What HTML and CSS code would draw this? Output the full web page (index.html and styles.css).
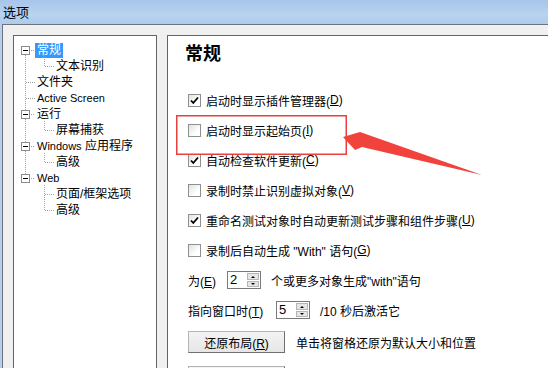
FILE: index.html
```html
<!DOCTYPE html>
<html lang="zh-CN">
<head>
    <meta charset="UTF-8">
    <meta name="viewport" content="width=device-width, initial-scale=1.0">
    <title>选项</title>
    <link rel="stylesheet" href="styles.css">
</head>
<body>
    <div class="titlebar">选项</div>

    <div class="window">
        <div class="tree_panel">
            <!-- dotted tree lines and expander boxes -->
            <svg class="tree_lines" width="142" height="200" viewBox="0 0 142 200">
                <g stroke="#a0a0a0" stroke-dasharray="1 1" fill="none">
                    <line x1="11.5" y1="19" x2="11.5" y2="138"/>
                    <line x1="17" y1="14.5" x2="21" y2="14.5"/>
                    <line x1="12" y1="46.5" x2="21" y2="46.5"/>
                    <line x1="12" y1="62.5" x2="21" y2="62.5"/>
                    <line x1="17" y1="78.5" x2="21" y2="78.5"/>
                    <line x1="17" y1="110.5" x2="21" y2="110.5"/>
                    <line x1="17" y1="142.5" x2="21" y2="142.5"/>
                    <line x1="30.5" y1="21" x2="30.5" y2="30"/>
                    <line x1="31" y1="30.5" x2="40" y2="30.5"/>
                    <line x1="30.5" y1="85" x2="30.5" y2="94"/>
                    <line x1="31" y1="94.5" x2="40" y2="94.5"/>
                    <line x1="30.5" y1="117" x2="30.5" y2="126"/>
                    <line x1="31" y1="126.5" x2="40" y2="126.5"/>
                    <line x1="30.5" y1="149" x2="30.5" y2="174"/>
                    <line x1="31" y1="158.5" x2="40" y2="158.5"/>
                    <line x1="31" y1="174.5" x2="40" y2="174.5"/>
                </g>
                <g fill="#fff" stroke="#8c8c8c">
                    <rect x="7.5" y="10.5" width="8" height="8"/>
                    <rect x="7.5" y="74.5" width="8" height="8"/>
                    <rect x="7.5" y="106.5" width="8" height="8"/>
                    <rect x="7.5" y="138.5" width="8" height="8"/>
                </g>
                <g stroke="#000">
                    <line x1="9" y1="14.5" x2="14" y2="14.5"/>
                    <line x1="9" y1="78.5" x2="14" y2="78.5"/>
                    <line x1="9" y1="110.5" x2="14" y2="110.5"/>
                    <line x1="9" y1="142.5" x2="14" y2="142.5"/>
                </g>
            </svg>
            <div class="tree_row"><span class="sel">常规</span></div>
            <div class="tree_row child">文本识别</div>
            <div class="tree_row">文件夹</div>
            <div class="tree_row latin">Active Screen</div>
            <div class="tree_row">运行</div>
            <div class="tree_row child">屏幕捕获</div>
            <div class="tree_row"><span class="latin">Windows</span> 应用程序</div>
            <div class="tree_row child">高级</div>
            <div class="tree_row latin">Web</div>
            <div class="tree_row child">页面/框架选项</div>
            <div class="tree_row child">高级</div>
        </div>

        <div class="page">
            <h2 class="page_title">常规</h2>

            <div class="check_row">
                <span class="box"><svg width="11" height="11"><path d="M2 5.5 L4.3 8 L9 2.5" stroke="#000" stroke-width="1.8" fill="none"/></svg></span>
                启动时显示插件管理器(<u>D</u>)
            </div>
            <div class="check_row">
                <span class="box"></span>
                启动时显示起始页(<u>I</u>)
            </div>
            <div class="check_row">
                <span class="box"><svg width="11" height="11"><path d="M2 5.5 L4.3 8 L9 2.5" stroke="#000" stroke-width="1.8" fill="none"/></svg></span>
                自动检查软件更新(<u>C</u>)
            </div>
            <div class="check_row">
                <span class="box"></span>
                录制时禁止识别虚拟对象(<u>V</u>)
            </div>
            <div class="check_row">
                <span class="box"><svg width="11" height="11"><path d="M2 5.5 L4.3 8 L9 2.5" stroke="#000" stroke-width="1.8" fill="none"/></svg></span>
                重命名测试对象时自动更新测试步骤和组件步骤(<u>U</u>)
            </div>
            <div class="check_row">
                <span class="box"></span>
                录制后自动生成 "With" 语句(<u>G</u>)
            </div>

            <div class="spin_row">
                <span class="spin_label short">为(<u>E</u>)</span>
                <span class="spin">
                    <span class="spin_val">2</span>
                    <span class="spin_btns"><span class="up"></span><span class="down"></span></span>
                </span>
                <span class="spin_text">个或更多对象生成"with"语句</span>
            </div>
            <div class="spin_row">
                <span class="spin_label long">指向窗口时(<u>T</u>)</span>
                <span class="spin">
                    <span class="spin_val">5</span>
                    <span class="spin_btns"><span class="up"></span><span class="down"></span></span>
                </span>
                <span class="spin_text">/10 秒后激活它</span>
            </div>

            <div class="btn_row">
                <button class="win_btn">还原布局(<u>R</u>)</button>
                <span class="btn_text">单击将窗格还原为默认大小和位置</span>
            </div>
            <div class="btn_row">
                <button class="win_btn"></button>
            </div>
        </div>
    </div>

    <svg class="overlay" width="548" height="368" viewBox="0 0 548 368">
        <rect x="176.75" y="115.75" width="169.5" height="38.5" fill="none" stroke="#e8403c" stroke-width="1.5"/>
        <polygon points="343,137 360,132 482,175 362,147 355,150" fill="#f2423c"/>
    </svg>
</body>
</html>
```

FILE: styles.css
```css
body {
    margin: 0;
    width: 548px;
    height: 368px;
    overflow: hidden;
    position: relative;
    font-family: "Liberation Sans", "Noto Sans CJK SC", sans-serif;
    font-size: 12px;
    color: #000;
    background: #b5d0ee;
}

u {
    text-decoration: underline;
}

.titlebar {
    height: 24px;
    box-sizing: border-box;
    padding: 4px 0 0 3px;
    font-family: "Noto Sans CJK SC", sans-serif;
    font-size: 13px;
    line-height: 16px;
    background: linear-gradient(to bottom, #a6c5e9, #b9d3ef 60%, #aecbec);
}

.window {
    display: flex;
    gap: 10px;
    height: 344px;
    box-sizing: border-box;
    margin-left: 2px;
    padding: 10px 0 0 10px;
    border-top: 1px solid #6d7378;
    border-left: 1px solid #6d7378;
    background: #f0f0f0;
}

.tree_panel {
    width: 144px;
    flex-shrink: 0;
    box-sizing: border-box;
    position: relative;
    padding-top: 6px;
    background: #fff;
    border: 1px solid #646464;
    border-bottom: none;
}

.tree_lines {
    position: absolute;
    top: 0;
    left: 0;
}

.tree_row {
    height: 16px;
    line-height: 16px;
    padding-left: 23px;
    white-space: nowrap;
}

.tree_row.child {
    padding-left: 42px;
}

.latin {
    font-size: 11px;
}

.sel {
    display: inline-block;
    height: 15px;
    line-height: 15px;
    margin: 1px 0 0 -2px;
    padding: 0 2px;
    background: #3399ff;
    color: #fff;
    vertical-align: top;
}

.page {
    flex: 1;
    display: flex;
    flex-direction: column;
    padding-left: 20px;
    background: #fff;
    border-top: 1px solid #646464;
    border-left: 1px solid #646464;
    overflow: hidden;
}

.page > * {
    flex-shrink: 0;
}

.page_title {
    margin: 4px 0 21px -3px;
    font-family: "Noto Sans CJK SC", sans-serif;
    font-size: 18px;
    line-height: 24px;
    font-weight: bold;
}

.check_row {
    display: flex;
    align-items: center;
    height: 30px;
    white-space: nowrap;
}

.box {
    width: 13px;
    height: 13px;
    box-sizing: border-box;
    margin-right: 5px;
    border: 1px solid #8e8f8f;
    background: linear-gradient(135deg, #e2e2e2, #ffffff 70%);
    display: flex;
}

.spin_row {
    display: flex;
    align-items: center;
    height: 30px;
    white-space: nowrap;
}

.spin_label.short {
    width: 39px;
}

.spin_label.long {
    width: 88px;
}

.spin {
    display: flex;
    width: 34px;
    height: 18px;
    box-sizing: border-box;
    border: 1px solid #7a7a7a;
    background: #fff;
}

.spin_val {
    flex: 1;
    padding-left: 2px;
    line-height: 16px;
    font-size: 13px;
}

.spin_btns {
    width: 14px;
    display: flex;
    flex-direction: column;
    gap: 1px;
    padding: 1px;
    box-sizing: border-box;
}

.spin_btns span {
    flex: 1;
    background: #e6e6e6;
    border: 1px solid #b5b5b5;
    position: relative;
}

.spin_btns .up::after,
.spin_btns .down::after {
    content: '';
    position: absolute;
    left: 3px;
    top: 2px;
    border-left: 2px solid transparent;
    border-right: 2px solid transparent;
}

.spin_btns .up::after {
    border-bottom: 2px solid #000;
}

.spin_btns .down::after {
    top: 1px;
    border-top: 2px solid #000;
}

.spin_text {
    margin-left: 10px;
}

.btn_row {
    display: flex;
    align-items: center;
    margin-top: 6px;
    white-space: nowrap;
}

.btn_row + .btn_row {
    margin-top: 13px;
}

.win_btn {
    width: 97px;
    height: 22px;
    flex-shrink: 0;
    padding: 0;
    font: inherit;
    color: #000;
    background: linear-gradient(to bottom, #f3f3f3, #e6e6e6);
    border: 1px solid #b4b4b4;
    border-right-color: #6f6f6f;
    border-bottom-color: #6f6f6f;
}

.btn_text {
    margin-left: 11px;
}

.overlay {
    position: absolute;
    top: 0;
    left: 0;
    pointer-events: none;
}
```
